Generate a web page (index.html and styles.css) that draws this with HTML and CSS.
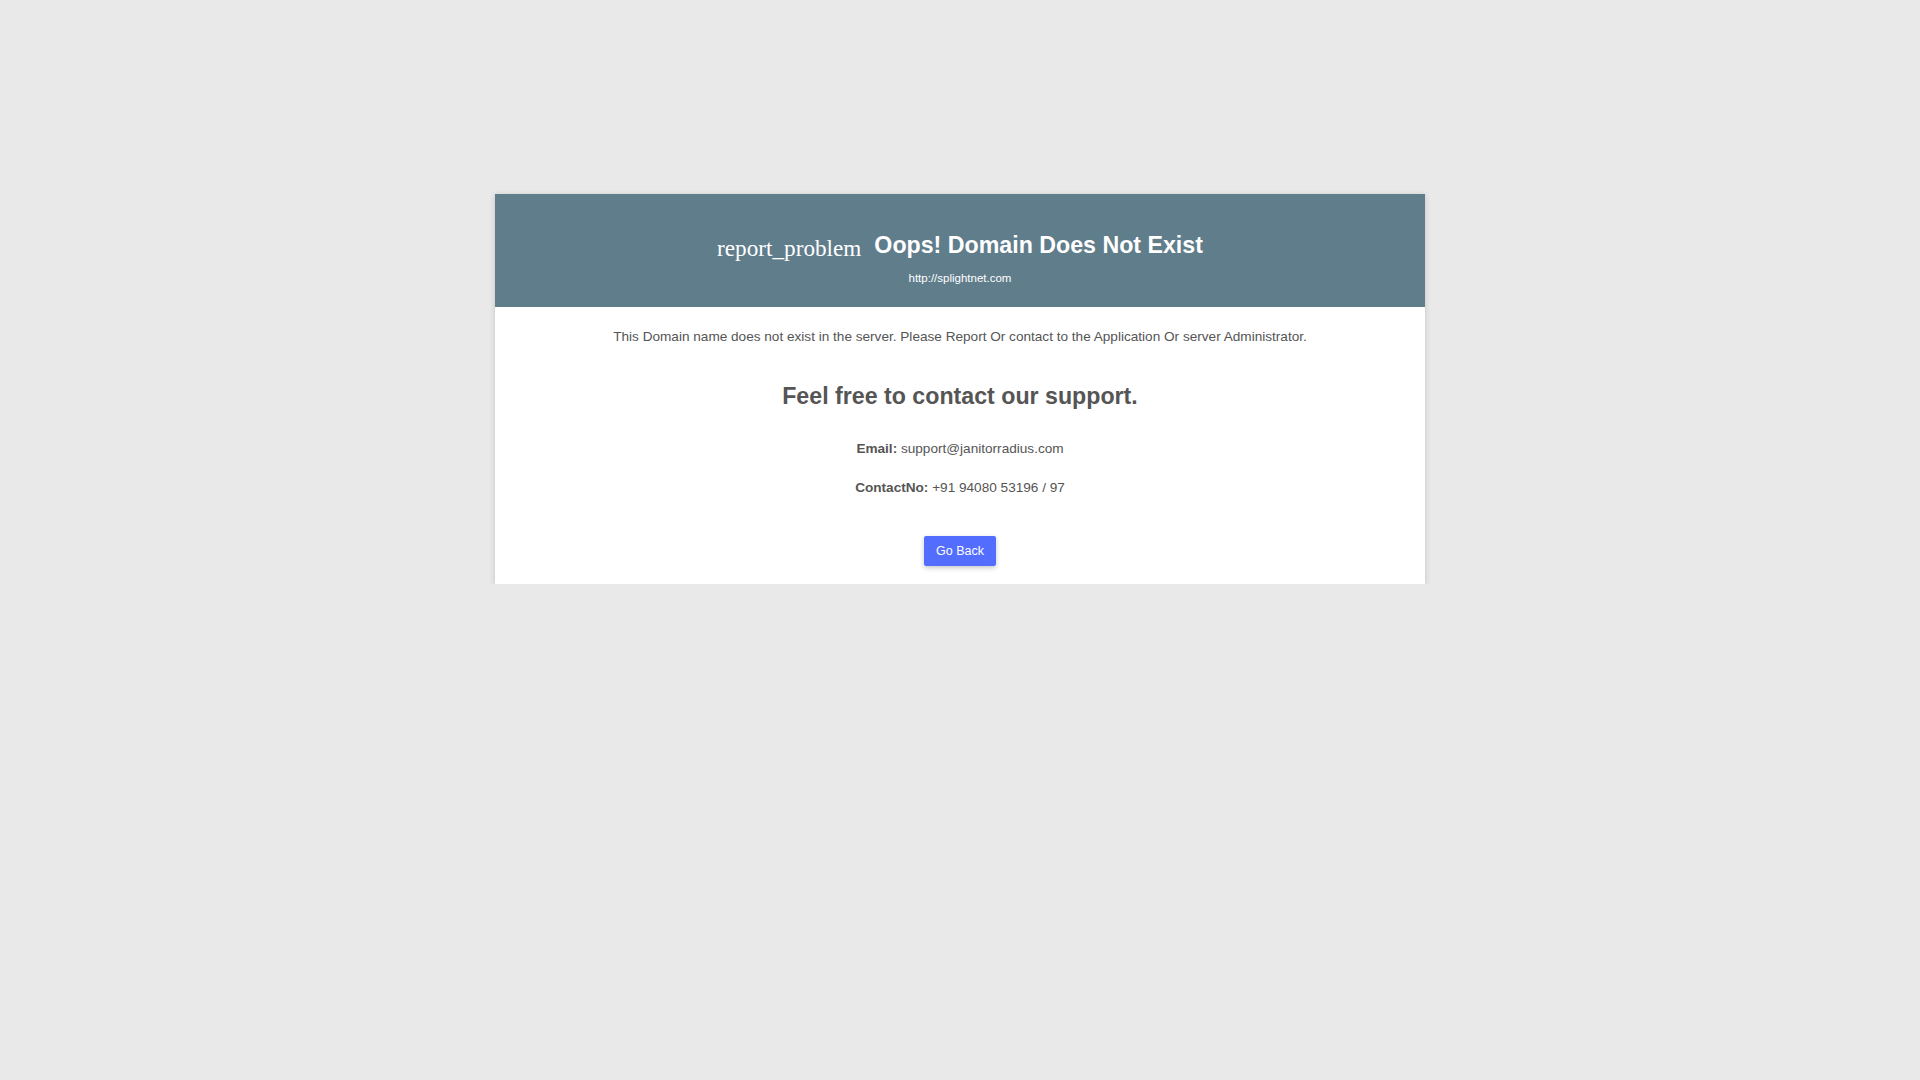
FILE: index.html
```html
<!DOCTYPE html>
<html lang="en">
<head>
<meta charset="utf-8">
<title>Oops! Domain Does Not Exist</title>
<link rel="stylesheet" href="styles.css">
</head>
<body>
<div class="page">
  <div class="card">
    <div class="card-header">
      <div class="heading">
        <span class="icon">report_problem</span><h1 class="title">Oops! Domain Does Not Exist</h1>
      </div>
      <div class="url">http://splightnet.com</div>
    </div>
    <div class="card-body">
      <p class="message">This Domain name does not exist in the server. Please Report Or contact to the Application Or server Administrator.</p>
      <h2 class="support">Feel free to contact our support.</h2>
      <p class="contact email"><strong>Email:</strong> support@janitorradius.com</p>
      <p class="contact phone"><strong>ContactNo:</strong> +91 94080 53196 / 97</p>
      <button class="btn" type="button">Go Back</button>
    </div>
  </div>
</div>
</body>
</html>
```
FILE: styles.css
```css
html, body {
  margin: 0;
  padding: 0;
}
body {
  background: #e9e9e9;
  font-family: "Liberation Sans", Arial, sans-serif;
  color: #555;
}
.page {
  padding-top: 194px;
  display: flex;
  justify-content: center;
}
.card {
  width: 930px;
  background: #fff;
  box-shadow: 0 1px 6px rgba(0, 0, 0, 0.16);
}
.card-header {
  background: #607d8b;
  color: #fff;
  padding: 38px 0 21.5px;
  text-align: center;
}
.heading {
  display: flex;
  justify-content: center;
  align-items: flex-start;
}
.icon {
  font-family: "Liberation Serif", "Times New Roman", serif;
  font-size: 23.2px;
  line-height: 27px;
  padding-top: 3.3px;
  margin-right: 13px;
  color: #fff;
}
.title {
  margin: 0;
  font-size: 23.2px;
  line-height: 27px;
  font-weight: bold;
}
.url {
  margin-top: 9px;
  font-size: 11.5px;
  line-height: 14px;
}
.card-body {
  padding: 20px 0 18px;
  display: flex;
  flex-direction: column;
  align-items: center;
  text-align: center;
}
.message {
  margin: 0;
  font-size: 13.6px;
  line-height: 20px;
}
.support {
  margin: 36px 0 0;
  font-size: 23.2px;
  line-height: 27px;
  font-weight: bold;
}
.contact {
  margin: 0;
  font-size: 13.6px;
  line-height: 20px;
}
.email {
  margin-top: 29px;
}
.phone {
  margin-top: 19.5px;
}
.btn {
  margin-top: 38px;
  height: 30px;
  padding: 0 12px;
  border: none;
  border-radius: 2px;
  background: #536dfe;
  color: #fff;
  font-family: "Liberation Sans", Arial, sans-serif;
  font-size: 12.5px;
  box-shadow: 0 2px 5px rgba(0, 0, 0, 0.22);
  cursor: pointer;
}
```
